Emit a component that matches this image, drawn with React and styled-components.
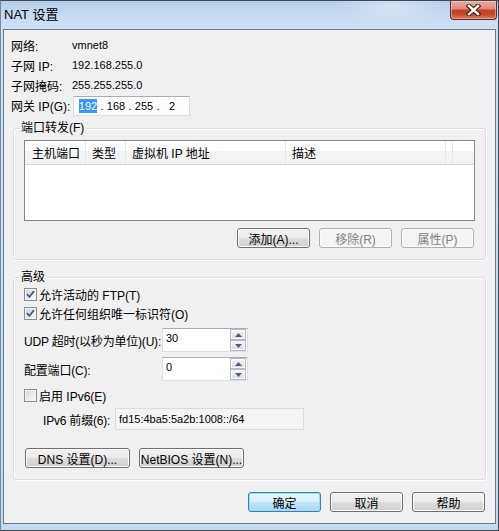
import styled, { createGlobalStyle } from "styled-components";

const GlobalStyle = createGlobalStyle`
  html, body {
    margin: 0;
    padding: 0;
    background: #ffffff;
  }
  body {
    font-family: "Liberation Sans", "Noto Sans CJK SC", sans-serif;
    font-size: 12px;
    color: #000000;
  }
  * {
    box-sizing: border-box;
  }
`;

const columns = [
  { label: "主机端口", width: 61, pad: 7 },
  { label: "类型", width: 40 },
  { label: "虚拟机 IP 地址", width: 160 },
  { label: "描述", width: 160 },
  { label: "", width: 2 },
];

const CheckMark = () => (
  <svg width="9" height="9" viewBox="0 0 9 9">
    <path d="M1 4.2 L3.4 6.8 L8 1.2" fill="none" stroke="#4a5f8e" strokeWidth="1.9" />
  </svg>
);

const CloseGlyph = () => (
  <svg width="15" height="12" viewBox="0 0 15 12">
    <path d="M3 2 L12 10 M12 2 L3 10" stroke="#3a1c16" strokeWidth="4.6" strokeLinecap="square" />
    <path d="M3 2 L12 10 M12 2 L3 10" stroke="#ffffff" strokeWidth="2.4" strokeLinecap="square" />
  </svg>
);

const SpinArrow = ({ down }) => (
  <svg width="7" height="4" viewBox="0 0 7 4">
    <path d={down ? "M0 0 H7 L3.5 4 Z" : "M0 4 H7 L3.5 0 Z"} fill="#4c5d87" />
  </svg>
);

const Check = ({ checked, children }) => (
  <CheckRow>
    <Box>{checked && <CheckMark />}</Box>
    <span>{children}</span>
  </CheckRow>
);

const Spin = ({ value }) => (
  <SpinBox>
    <SpinText>{value}</SpinText>
    <SpinButtons>
      <SpinButton>
        <SpinArrow />
      </SpinButton>
      <SpinButton>
        <SpinArrow down />
      </SpinButton>
    </SpinButtons>
  </SpinBox>
);

const App = () => {
  return (
    <>
      <GlobalStyle />
      <Window>
        <TitleBar>
          <Title>NAT 设置</Title>
          <CloseButton>
            <CloseGlyph />
          </CloseButton>
        </TitleBar>
        <Client>
          <InfoGrid>
            <span>网络:</span>
            <Value>vmnet8</Value>
            <span>子网 IP:</span>
            <Value>192.168.255.0</Value>
            <span>子网掩码:</span>
            <Value>255.255.255.0</Value>
            <span>网关 IP(G):</span>
            <IpBox>
              <IpField>
                <Selected>192</Selected>
              </IpField>
              <IpDot>.</IpDot>
              <IpField>168</IpField>
              <IpDot>.</IpDot>
              <IpField>255</IpField>
              <IpDot>.</IpDot>
              <IpField>2</IpField>
            </IpBox>
          </InfoGrid>

          <Group>
            <Legend>端口转发(F)</Legend>
            <ListView>
              <HeaderRow>
                {columns.map((c, i) => (
                  <HeaderCell key={i} $w={c.width} $pad={c.pad}>
                    {c.label}
                  </HeaderCell>
                ))}
              </HeaderRow>
            </ListView>
            <ButtonRow>
              <Button>添加(A)...</Button>
              <Button disabled>移除(R)</Button>
              <Button disabled>属性(P)</Button>
            </ButtonRow>
          </Group>

          <Group $top={10} $padTop={1}>
            <Legend>高级</Legend>
            <Check checked>允许活动的 FTP(T)</Check>
            <Check checked>允许任何组织唯一标识符(O)</Check>
            <FieldRow>
              <FieldLabel>UDP 超时(以秒为单位)(U):</FieldLabel>
              <Spin value="30" />
            </FieldRow>
            <FieldRow>
              <FieldLabel>配置端口(C):</FieldLabel>
              <Spin value="0" />
            </FieldRow>
            <CheckGap>
              <Check>启用 IPv6(E)</Check>
            </CheckGap>
            <PrefixRow>
              <FieldLabel>IPv6 前缀(6):</FieldLabel>
              <ReadOnlyBox>fd15:4ba5:5a2b:1008::/64</ReadOnlyBox>
            </PrefixRow>
            <ButtonRow $start $top={18}>
              <Button $w={105}>DNS 设置(D)...</Button>
              <Button $w={105}>NetBIOS 设置(N)...</Button>
            </ButtonRow>
          </Group>

          <Footer>
            <Button $primary>确定</Button>
            <Button>取消</Button>
            <Button>帮助</Button>
          </Footer>
        </Client>
      </Window>
    </>
  );
};

const Window = styled.div`
  width: 499px;
  height: 531px;
  display: flex;
  flex-direction: column;
  padding: 0 2px 6px 2px;
  border: 1px solid #3d4854;
  border-left-color: #7189a2;
  background: linear-gradient(180deg, #b8cfe9 0px, #c9dcf1 18px, #cfe0f3 28px, #c6d9ee 100%);
`;

const TitleBar = styled.div`
  height: 28px;
  margin: 0 -2px;
  padding-left: 3px;
  display: flex;
  align-items: flex-start;
  justify-content: space-between;
  background: radial-gradient(ellipse 60px 18px at 390px 6px, rgba(255, 255, 255, 0.35), rgba(255, 255, 255, 0));
`;

const Title = styled.div`
  font-size: 13px;
  line-height: 28px;
  color: #000000;
`;

const CloseButton = styled.div`
  width: 47px;
  height: 19px;
  margin-right: 1px;
  display: flex;
  align-items: center;
  justify-content: center;
  border: 1px solid #5b2a21;
  border-top: none;
  border-radius: 0 0 4px 4px;
  background: linear-gradient(180deg, #eaab9c 0%, #dc8d7b 42%, #c4402a 52%, #c7452c 72%, #de7658 100%);
  box-shadow: inset 0 0 0 1px rgba(255, 220, 210, 0.45);
`;

const Client = styled.div`
  flex: 1;
  display: flex;
  flex-direction: column;
  background: #f0f0f0;
  border: 1px solid #687a8e;
`;

const InfoGrid = styled.div`
  display: grid;
  grid-template-columns: 61px 1fr;
  grid-template-rows: 20px 20px 20px 21px;
  align-items: center;
  margin: 5px 0 0 7px;
`;

const Value = styled.span`
  font-size: 11px;
`;

const IpBox = styled.div`
  align-self: end;
  width: 117px;
  height: 20px;
  margin-left: 1px;
  padding-left: 2px;
  display: flex;
  align-items: center;
  background: #ffffff;
  border: 1px solid #dbdfe6;
  border-top-color: #abadb3;
  font-size: 11px;
`;

const IpField = styled.span`
  width: 24px;
  text-align: center;
`;

const IpDot = styled.span`
  width: 4px;
  text-align: center;
`;

const Selected = styled.span`
  background: #3399ff;
  color: #ffffff;
  padding: 1px 0;
`;

const Group = styled.fieldset`
  margin: ${(p) => p.$top || 5}px 9px 0 9px;
  padding: ${(p) => (p.$padTop !== undefined ? p.$padTop : 5)}px 10px 11px 10px;
  min-width: 0;
  border: 1px solid #d5dfe5;
  border-radius: 3px;
  box-shadow: inset 1px 1px 0 #ffffff, 1px 1px 0 #ffffff;
`;

const Legend = styled.legend`
  margin-left: -5px;
  padding: 0 2px;
  line-height: 14px;
  background: #f0f0f0;
`;

const ListView = styled.div`
  height: 81px;
  background: #ffffff;
  border: 1px solid #828790;
`;

const HeaderRow = styled.div`
  display: flex;
  height: 24px;
  background: linear-gradient(180deg, #ffffff 0%, #ffffff 45%, #f2f3f5 45%, #f2f3f5 100%);
  border-bottom: 1px solid #d5d5d5;
`;

const HeaderCell = styled.div`
  flex: none;
  width: ${(p) => p.$w}px;
  padding-left: ${(p) => p.$pad || 6}px;
  display: flex;
  align-items: center;
  white-space: nowrap;
  overflow: hidden;
  border-right: 1px solid #e3e8ee;
`;

const ButtonRow = styled.div`
  display: flex;
  justify-content: ${(p) => (p.$start ? "flex-start" : "flex-end")};
  gap: 9px;
  margin-top: ${(p) => p.$top || 7}px;
  padding: ${(p) => (p.$start ? "0 0 0 1px" : "0 1px 0 0")};
`;

const Button = styled.button`
  width: ${(p) => p.$w || 73}px;
  height: 20px;
  padding: 0;
  font-family: inherit;
  font-size: 12px;
  color: #000000;
  white-space: nowrap;
  border: 1px solid ${(p) => (p.$primary ? "#3c7fb1" : "#707070")};
  border-radius: 3px;
  background: ${(p) =>
    p.$primary
      ? "linear-gradient(180deg, #eaf6fd 0%, #d9f0fc 50%, #bee6fd 50%, #a7d9f5 100%)"
      : "linear-gradient(180deg, #f2f2f2 0%, #ebebeb 50%, #dddddd 50%, #cfcfcf 100%)"};
  box-shadow: inset 0 0 0 1px ${(p) => (p.$primary ? "#8fe0fb" : "#fcfcfc")};

  &:disabled {
    color: #838383;
    border-color: #adb2b5;
    background: #f4f4f4;
    box-shadow: inset 0 0 0 1px #fafafa;
  }
`;

const CheckRow = styled.div`
  height: 19px;
  display: flex;
  align-items: center;
  gap: 2px;
`;

const Box = styled.span`
  width: 13px;
  height: 13px;
  display: flex;
  align-items: center;
  justify-content: center;
  border: 1px solid #8e8f8f;
  background: linear-gradient(135deg, #cdd1d6 0%, #eceef0 60%, #f8f8f8 100%);
  box-shadow: inset 0 0 0 1px #f4f4f4;
`;

const FieldRow = styled.div`
  display: grid;
  grid-template-columns: 138px 86px;
  align-items: center;
  height: 24px;
  margin-top: 5px;
`;

const FieldLabel = styled.span`
  white-space: nowrap;
  letter-spacing: -0.2px;
`;

const SpinBox = styled.div`
  height: 24px;
  display: flex;
  background: #ffffff;
  border: 1px solid #dbdfe6;
  border-top-color: #abadb3;
`;

const SpinText = styled.span`
  flex: 1;
  padding: 2px 0 0 3px;
  font-size: 11px;
  line-height: 14px;
`;

const SpinButtons = styled.div`
  width: 16px;
  margin-right: 1px;
  display: flex;
  flex-direction: column;
`;

const SpinButton = styled.div`
  height: 11px;
  display: flex;
  align-items: center;
  justify-content: center;
  border: 1px solid #b5b9bf;
  background: linear-gradient(180deg, #f6f6f6 0%, #e9e9e9 50%, #dadada 100%);
  box-shadow: inset 0 0 0 1px #fbfbfb;
`;

const CheckGap = styled.div`
  margin-top: 5px;
`;

const PrefixRow = styled.div`
  display: grid;
  grid-template-columns: 72px 189px;
  align-items: center;
  height: 22px;
  margin-top: 3px;
  padding-left: 19px;
`;

const ReadOnlyBox = styled.div`
  height: 22px;
  display: flex;
  align-items: center;
  padding-left: 3px;
  font-size: 11px;
  background: #f4f4f4;
  border: 1px solid #dadada;
`;

const Footer = styled.div`
  display: flex;
  justify-content: flex-end;
  gap: 9px;
  margin-top: 12px;
  padding-right: 10px;
`;

export default App;
